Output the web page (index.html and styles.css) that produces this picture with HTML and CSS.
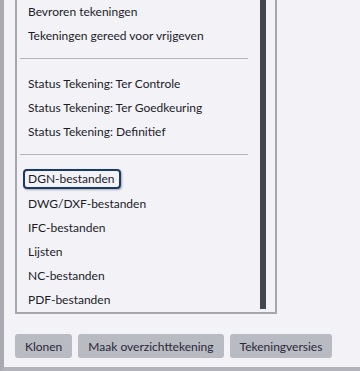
FILE: index.html
```html
<!DOCTYPE html>
<html lang="nl">
  <head>
    <meta charset="UTF-8" />
    <title>Tekeningen</title>
    <link rel="stylesheet" href="styles.css">
  </head>
  <body>
    <div class="frame">
      <div class="listbox">
        <ul class="items">
          <li>Bevroren tekeningen</li>
          <li>Tekeningen gereed voor vrijgeven</li>
          <li class="sep"></li>
          <li>Status Tekening: Ter Controle</li>
          <li>Status Tekening: Ter Goedkeuring</li>
          <li>Status Tekening: Definitief</li>
          <li class="sep"></li>
          <li><span class="focus">DGN-bestanden</span></li>
          <li>DWG/DXF-bestanden</li>
          <li>IFC-bestanden</li>
          <li>Lijsten</li>
          <li>NC-bestanden</li>
          <li>PDF-bestanden</li>
        </ul>
        <div class="thumb"></div>
      </div>
      <div class="buttons">
        <button class="btn">Klonen</button>
        <button class="btn">Maak overzichttekening</button>
        <button class="btn">Tekeningversies</button>
      </div>
    </div>
  </body>
</html>
```

FILE: styles.css
```css
html,
body {
  margin: 0;
  height: 371px;
  overflow: hidden;
  background-color: #f2f2f7;
  font-family: Lato, sans-serif;
  font-size: 12px;
  color: #1c1c2a;
}

.frame {
  box-sizing: border-box;
  height: 371px;
  border-left: 4px solid #a9a9b1;
  border-bottom: 4px solid #b3b3bb;
}

.listbox {
  display: flex;
  margin-left: 11px;
  width: 262px;
  box-sizing: border-box;
  border: 2px solid #a6a6ae;
  border-top: none;
}

.items {
  flex: 1;
  list-style: none;
  margin: 0;
  padding: 0;
}

.items li {
  box-sizing: border-box;
  height: 24px;
  line-height: 24px;
  padding-left: 11px;
  white-space: nowrap;
}

.items li.sep {
  padding: 10px 0 0 3px;
}

.items li.sep::before {
  content: "";
  display: block;
  width: 228px;
  height: 1px;
  background-color: #b4b4bc;
}

/* keyboard focus on the selected row */
.focus {
  display: inline-block;
  box-sizing: border-box;
  margin: 1px 0 0 -5px;
  padding: 0 5px 0 3px;
  height: 20px;
  line-height: 16px;
  border: 2px solid #173a6b;
  border-radius: 4px;
  box-shadow: 1px 1px 2px rgba(0, 0, 0, 0.3);
  vertical-align: top;
}

.thumb {
  width: 6px;
  margin: 0 9px 3px 0;
  background-color: #45474e;
}

.buttons {
  display: flex;
  gap: 6px;
  margin: 20px 0 0 11px;
}

.btn {
  height: 24px;
  padding: 0 10px;
  border: none;
  border-radius: 3px;
  background-color: #b9bbc3;
  color: #2a2838;
  font-family: Lato, sans-serif;
  font-size: 12px;
}
```
